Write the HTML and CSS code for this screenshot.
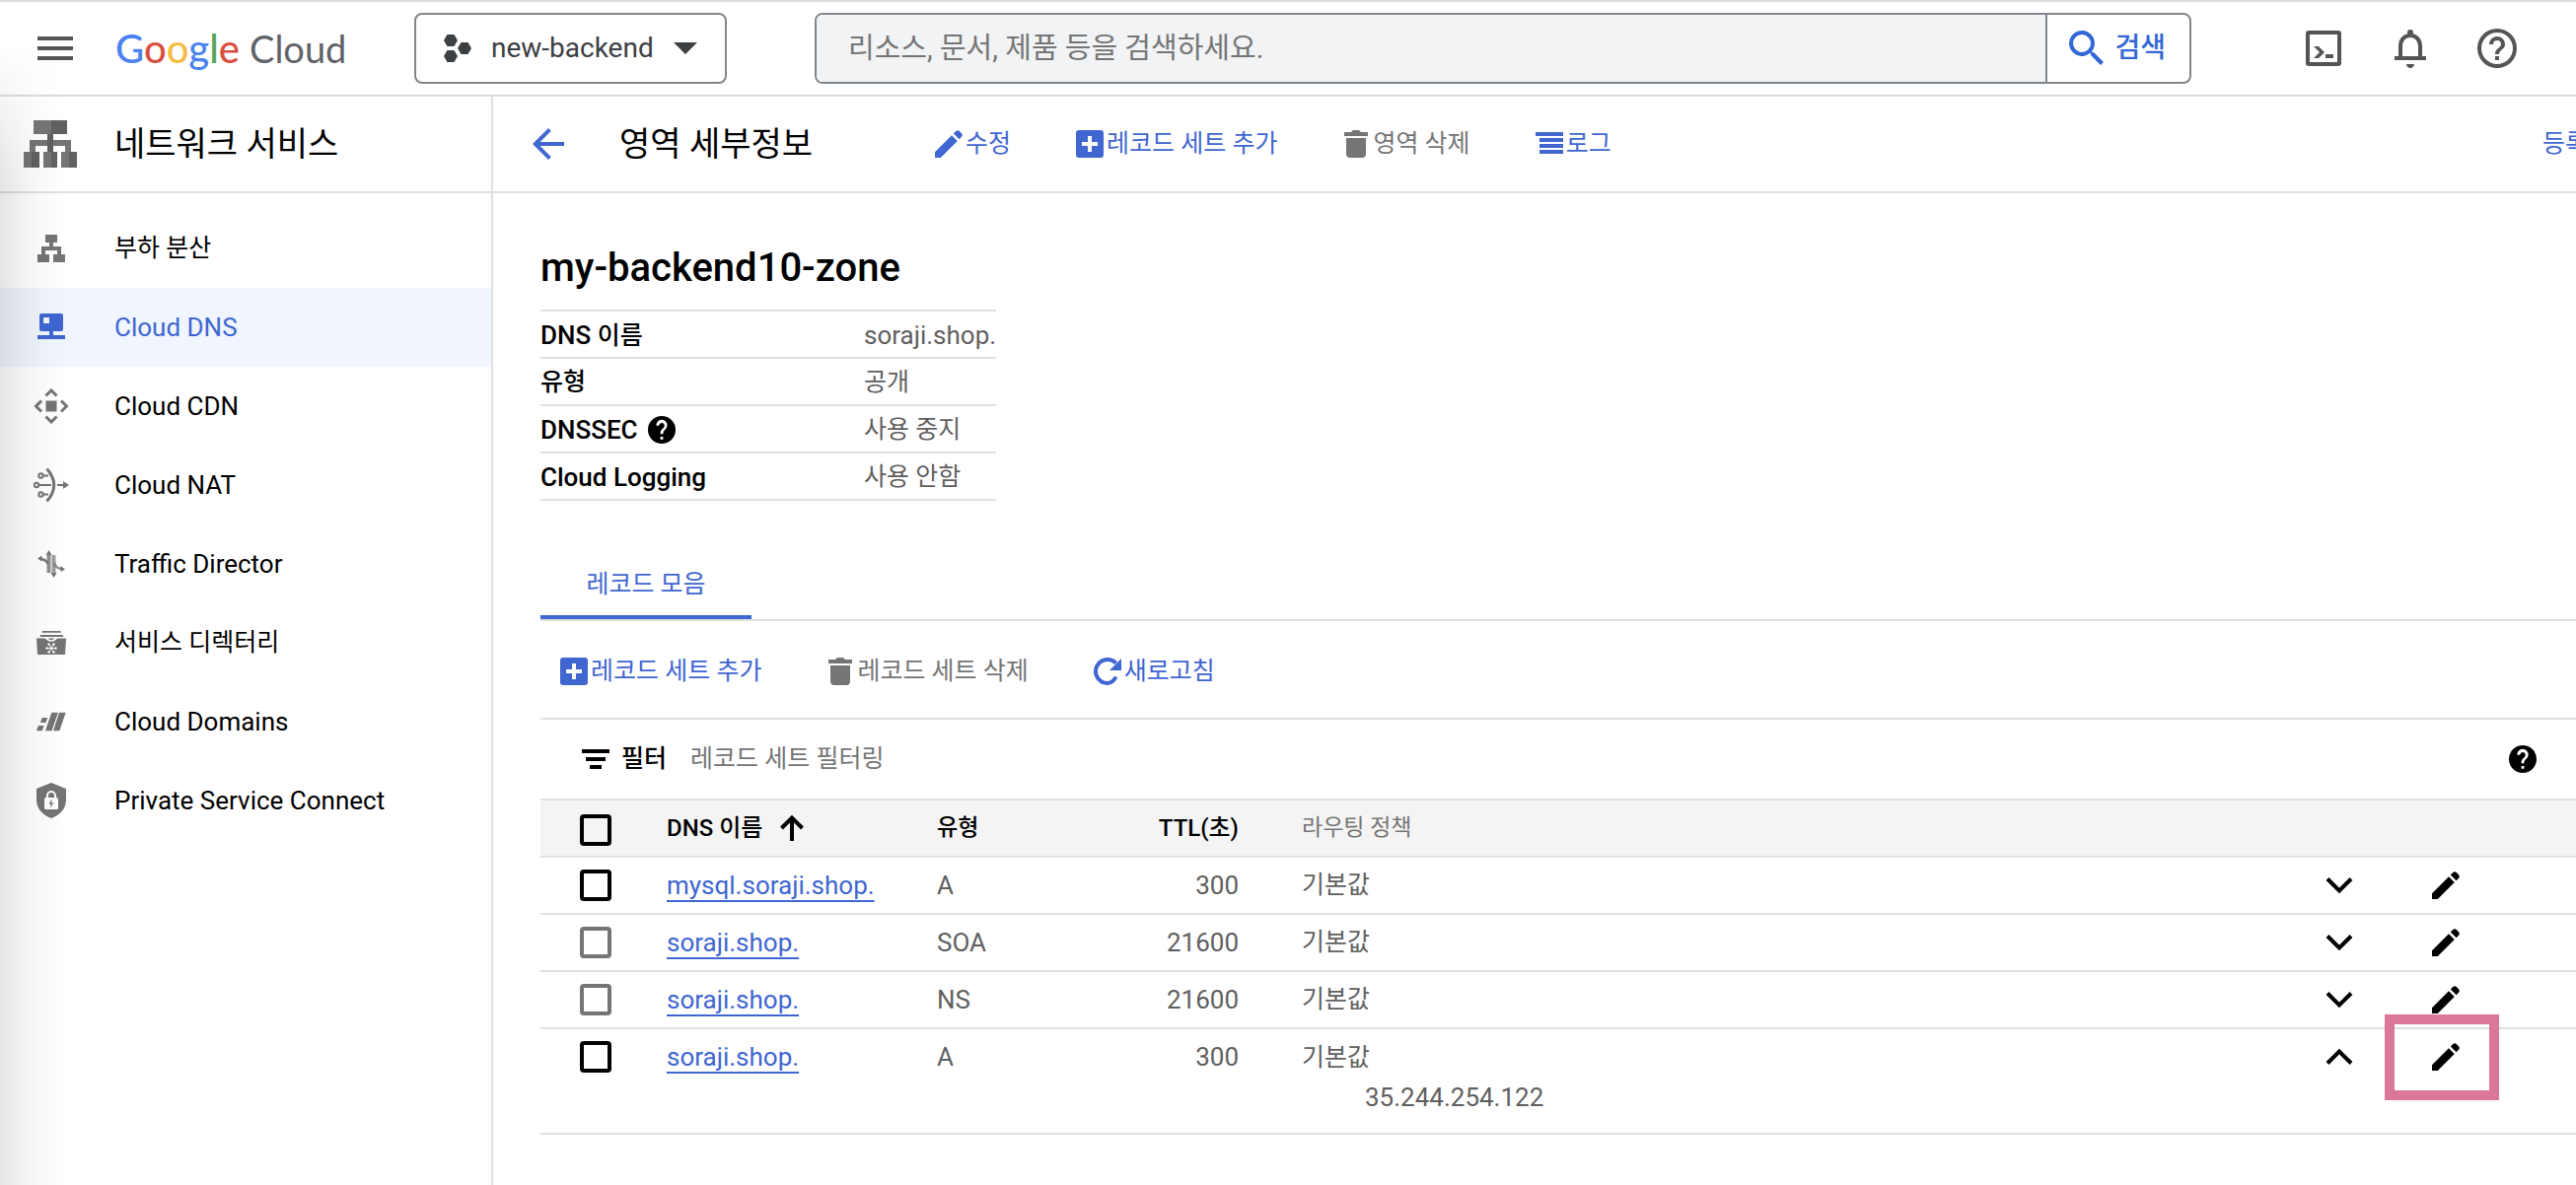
FILE: index.html
```html
<!DOCTYPE html>
<html lang="ko">
<head>
<meta charset="utf-8">
<meta name="viewport" content="width=device-width, initial-scale=1">
<title>영역 세부정보 – 네트워크 서비스 – Google Cloud</title>
<link rel="stylesheet" href="styles.css">
</head>
<body>
<svg class="sprite" aria-hidden="true">
  <symbol id="i-pencil" viewBox="0 0 28 28"><path d="M0 22.200 17 5.200 22.800 11 5.800 28H0zM18.800 3.400 21.200 1q1.800-1.600 3.600 0l2.200 2.200q1.600 1.800 0 3.600l-2.400 2.400z"/></symbol>
  <symbol id="i-add" viewBox="0 0 28 28"><path fill-rule="evenodd" d="M3 0h22a3 3 0 0 1 3 3v22a3 3 0 0 1-3 3H3a3 3 0 0 1-3-3V3a3 3 0 0 1 3-3zm9 6v6H6v4h6v6h4v-6h6v-4h-6V6z"/></symbol>
  <symbol id="i-trash" viewBox="0 0 28 28"><path d="M2 2h7l2-2h6l2 2h7v4H2zM4 8h20v16a4 4 0 0 1-4 4H8a4 4 0 0 1-4-4z"/></symbol>
  <symbol id="i-log" viewBox="0 0 28 28"><path d="M0 2h28v4H0zM4 8h24v4H4zM4 14h24v4H4zM4 20h24v4H4z"/></symbol>
  <symbol id="i-refresh" viewBox="0 0 28 28"><path d="M22.500 19.500A10.500 12 0 0 1 14 26 12 12 0 1 1 22.600 5.600" fill="none" stroke="currentColor" stroke-width="4"/><path d="M28 1v12H16z"/></symbol>
  <symbol id="i-help" viewBox="2 2 20 20"><path d="M12 2a10 10 0 1 0 0 20 10 10 0 0 0 0-20zm1 17h-2v-2h2zm2.070-7.750-.900.920C13.450 12.900 13 13.500 13 15h-2v-.500c0-1.100.450-2.100 1.170-2.830l1.240-1.260A2 2 0 1 0 10 9H8a4 4 0 1 1 7.070 2.250z"/></symbol>
  <symbol id="i-chevron" viewBox="0 0 28 28"><path d="M2 7.500 14 19.500 26 7.500" fill="none" stroke="currentColor" stroke-width="4"/></symbol>
</svg>

<header class="topbar">
  <button class="icon-btn" type="button" aria-label="탐색 메뉴">
    <svg viewBox="0 0 24 24"><path d="M3 18h18v-2H3zm0-5h18v-2H3zm0-7v2h18V6z"/></svg>
  </button>
  <a class="logo" href="#" aria-label="Google Cloud"><span class="logo-google"><span class="g-blue">G</span><span class="g-red">o</span><span class="g-yellow">o</span><span class="g-blue">g</span><span class="g-green">l</span><span class="g-red">e</span></span><span class="logo-cloud">Cloud</span></a>
  <button class="project" type="button">
    <svg class="project-icon" viewBox="0 0 28 28"><path d="M3.500 0h7L14 6l-3.500 6h-7L0 6zM17.500 8h7l3.500 6-3.500 6h-7L14 14zM3.500 16h7l3.500 6-3.500 6h-7L0 22z"/></svg>
    <span>new-backend</span>
    <svg class="caret" viewBox="0 0 24 12"><path d="M0 0h24L12 12z"/></svg>
  </button>
  <form class="search">
    <input type="search" aria-label="검색" placeholder="리소스, 문서, 제품 등을 검색하세요.">
    <button type="button">
      <svg viewBox="0 0 24 24"><path d="M15.500 14h-.790l-.280-.270A6.500 6.500 0 1 0 13.730 14.430l.270.280v.790l5 4.990L20.490 19zm-6 0a4.500 4.500 0 1 1 0-9 4.500 4.500 0 0 1 0 9z"/></svg>검색
    </button>
  </form>
  <div class="tools">
    <button class="icon-btn" type="button" aria-label="Cloud Shell">
      <svg viewBox="0 0 48 48"><path fill-rule="evenodd" d="M9 6h30a3 3 0 0 1 3 3v30a3 3 0 0 1-3 3H9a3 3 0 0 1-3-3V9a3 3 0 0 1 3-3zm1 4v28h28V10z"/><path d="M14 22h5l6 6-6 6h-5l6-6zM26 30h8v4h-8z"/></svg>
    </button>
    <button class="icon-btn" type="button" aria-label="알림">
      <svg viewBox="0 0 24 24"><path d="M12 22c1.100 0 2-.900 2-2h-4c0 1.100.890 2 2 2zm6-6v-5c0-3.070-1.640-5.640-4.500-6.320V4a1.500 1.500 0 0 0-3 0v.680C7.630 5.360 6 7.920 6 11v5H4v2h16v-2zm-2 0H8v-5c0-2.480 1.510-4.500 4-4.500s4 2.020 4 4.500z"/></svg>
    </button>
    <button class="icon-btn" type="button" aria-label="도움말">
      <svg viewBox="0 0 24 24"><path d="M11 18h2v-2h-2zm1-16a10 10 0 1 0 0 20 10 10 0 0 0 0-20zm0 18a8 8 0 1 1 0-16 8 8 0 0 1 0 16zm0-14a4 4 0 0 0-4 4h2a2 2 0 1 1 4 0c0 2-3 1.750-3 5h2c0-2.250 3-2.500 3-5a4 4 0 0 0-4-4z"/></svg>
    </button>
  </div>
</header>

<div class="shell">
  <aside class="sidebar">
    <div class="product">
      <svg viewBox="0 0 54 48"><path fill="#757575" d="M10 0h34v14H10zM6 20h42v6H6zM6 26h6v6H6zM42 26h6v6h-6zM0 32h16v16H0zM20 32h14v16H20zM38 32h16v16H38z"/><path fill="#616161" d="M28 0h16v14H28zM24 14h6v18h-6zM8 32h8v16H8zM28 32h6v16h-6zM46 32h8v16h-8z"/></svg>
      <h2>네트워크 서비스</h2>
    </div>
    <nav aria-label="네트워크 서비스">
      <a class="ko" href="#"><svg viewBox="0 0 36 36"><path d="M12 4h12v8h-4v4h8v8h4v8H20v-8h4v-4H12v4h4v8H4v-8h4v-8h8v-4h-4z"/></svg>부하 분산</a>
      <a class="active" href="#" aria-current="page"><svg viewBox="0 0 36 36"><path fill-rule="evenodd" d="M8 4h20a2 2 0 0 1 2 2v14a2 2 0 0 1-2 2h-8v4h12v4H4v-4h12v-4H8a2 2 0 0 1-2-2V6a2 2 0 0 1 2-2zm2 4v6h6V8z"/></svg>Cloud DNS</a>
      <a href="#"><svg viewBox="0 0 36 36"><path d="M12.500 12.500h11v11h-11z"/><path d="m12.500 7.500 5.500-5.500 5.500 5.500M12.500 28.500l5.500 5.500 5.500-5.500M8 12.500 2.500 18 8 23.500M28 12.500l5.500 5.500-5.500 5.500" fill="none" stroke="currentColor" stroke-width="3"/></svg>Cloud CDN</a>
      <a href="#"><svg viewBox="0 0 36 36"><g fill="none" stroke="currentColor" stroke-width="2"><circle cx="7.500" cy="8.500" r="2.200"/><circle cx="3" cy="18" r="2.200"/><circle cx="7.500" cy="27.500" r="2.200"/><path d="M10 8.500h5M5.500 18H18M10 27.500h5M24 18h7"/><path d="M13.500 1.500q14.500 16.500 0 33" stroke-width="3"/></g><path d="m30 14 6 4-6 4z"/></svg>Cloud NAT</a>
      <a href="#"><svg viewBox="0 0 36 36"><g fill="none" stroke="currentColor"><path d="M15.500 27V8" stroke-width="4" opacity=".8"/><path d="M20.500 9v19" stroke-width="4" opacity=".7"/><path d="M14.500 18q-1-4-7-5" stroke-width="2.500"/><path d="M21 17q1 5 7 6" stroke-width="2.500" opacity=".8"/></g><path d="m15.500 4 3 5h-6zM20.500 32l-3-5h6zM4 12.500l4.500-3v6zM32 23.500 27.500 20v6z"/></svg>Traffic Director</a>
      <a class="ko" href="#"><svg viewBox="0 0 36 36"><path d="M9 6h18.500l.5 1.800H8.500zM7 10h22.500l1 2h-24zM3 13.500h8.500l4 3h5l4-3H33L32 30H4z"/><path d="M14.500 13.500h7l-2 1.500h-3z"/><path d="M13 23.500h10M15.500 19.500l5 8M20.500 19.500l-5 8" stroke="#fff"/><g fill="#fff"><circle cx="15.500" cy="19.500" r="1.200"/><circle cx="20.500" cy="19.500" r="1.200"/><circle cx="13.500" cy="23.500" r="1.200"/><circle cx="22.500" cy="23.500" r="1.200"/><circle cx="15.500" cy="27.500" r="1.200"/><circle cx="20.500" cy="27.500" r="1.200"/></g></svg>서비스 디렉터리</a>
      <a href="#"><svg viewBox="0 0 36 36"><path d="M26 8.700h6.700l-6.400 18.600H20zM18.300 8.700H25l-6.500 18.600H12zM8.700 14h5.500l-1.700 5H7zM5 22h5.500l-1.700 5.300H3z"/></svg>Cloud Domains</a>
      <a href="#"><svg viewBox="0 0 36 36"><path d="m18 0 15 6v11q0 13-15 19Q3 30 3 17V6z"/><rect x="11" y="15" width="14" height="12" rx="1.500" fill="#fff"/><path d="M14 15v-2a4 4 0 0 1 8 0v2" fill="none" stroke="#fff" stroke-width="2"/><path d="m18.500 16.500-3 5h2.300l-.800 4 3.500-5h-2.300z"/></svg>Private Service Connect</a>
    </nav>
  </aside>

  <main>
    <div class="actionbar">
      <button class="back" type="button" aria-label="뒤로"><svg viewBox="4 4 16 16"><path d="M20 11H7.830l5.590-5.590L12 4l-8 8 8 8 1.410-1.410L7.830 13H20z"/></svg></button>
      <h1>영역 세부정보</h1>
      <div class="actions">
        <button class="action" type="button"><svg><use href="#i-pencil"/></svg>수정</button>
        <button class="action" type="button"><svg><use href="#i-add"/></svg>레코드 세트 추가</button>
        <button class="action muted" type="button"><svg><use href="#i-trash"/></svg>영역 삭제</button>
        <button class="action" type="button"><svg><use href="#i-log"/></svg>로그</button>
      </div>
      <button class="action register" type="button">등록</button>
    </div>

    <div class="content">
      <h2 class="zone">my-backend10-zone</h2>
      <table class="details">
        <tbody>
          <tr><th scope="row">DNS <span class="ko">이름</span></th><td>soraji.shop.</td></tr>
          <tr><th class="ko" scope="row">유형</th><td class="ko">공개</td></tr>
          <tr><th scope="row"><span class="with-icon">DNSSEC <svg><use href="#i-help"/></svg></span></th><td class="ko">사용 중지</td></tr>
          <tr><th scope="row">Cloud Logging</th><td class="ko">사용 안함</td></tr>
        </tbody>
      </table>

      <div class="tabs" role="tablist">
        <button class="tab" type="button" role="tab" aria-selected="true">레코드 모음</button>
      </div>

      <div class="toolbar">
        <button class="action" type="button"><svg><use href="#i-add"/></svg>레코드 세트 추가</button>
        <button class="action muted" type="button"><svg><use href="#i-trash"/></svg>레코드 세트 삭제</button>
        <button class="action" type="button"><svg><use href="#i-refresh"/></svg>새로고침</button>
      </div>

      <div class="filter">
        <svg viewBox="0 0 28 28"><path d="M0 4h28v4H0zM4 12h20v4H4zM8 20h12v4H8z"/></svg>
        <label for="filter">필터</label>
        <input id="filter" type="text" placeholder="레코드 세트 필터링">
        <button class="plain" type="button" aria-label="도움말"><svg><use href="#i-help"/></svg></button>
      </div>

      <table class="records">
        <colgroup><col class="c-check"><col class="c-name"><col class="c-type"><col class="c-ttl"><col><col class="c-expand"><col class="c-edit"><col class="c-end"></colgroup>
        <thead>
          <tr>
            <th><input type="checkbox" aria-label="모두 선택"></th>
            <th scope="col"><span class="with-icon">DNS 이름 <svg class="sort" viewBox="0 0 28 28"><path d="M14 27V3M3.500 14 14 3.500 24.500 14" fill="none" stroke="currentColor" stroke-width="4"/></svg></span></th>
            <th class="ko" scope="col">유형</th>
            <th class="num" scope="col">TTL(초)</th>
            <th class="ko soft" scope="col">라우팅 정책</th>
            <th></th><th></th><th></th>
          </tr>
        </thead>
        <tbody>
          <tr>
            <td><input type="checkbox" aria-label="mysql.soraji.shop. A"></td>
            <td><a href="#">mysql.soraji.shop.</a></td><td>A</td><td class="num">300</td><td class="ko">기본값</td>
            <td class="mid"><button class="plain" type="button" aria-label="펼치기"><svg><use href="#i-chevron"/></svg></button></td>
            <td class="mid"><button class="plain" type="button" aria-label="수정"><svg><use href="#i-pencil"/></svg></button></td><td></td>
          </tr>
          <tr>
            <td><input type="checkbox" aria-label="soraji.shop. SOA" disabled></td>
            <td><a href="#">soraji.shop.</a></td><td>SOA</td><td class="num">21600</td><td class="ko">기본값</td>
            <td class="mid"><button class="plain" type="button" aria-label="펼치기"><svg><use href="#i-chevron"/></svg></button></td>
            <td class="mid"><button class="plain" type="button" aria-label="수정"><svg><use href="#i-pencil"/></svg></button></td><td></td>
          </tr>
          <tr>
            <td><input type="checkbox" aria-label="soraji.shop. NS" disabled></td>
            <td><a href="#">soraji.shop.</a></td><td>NS</td><td class="num">21600</td><td class="ko">기본값</td>
            <td class="mid"><button class="plain" type="button" aria-label="펼치기"><svg><use href="#i-chevron"/></svg></button></td>
            <td class="mid"><button class="plain" type="button" aria-label="수정"><svg><use href="#i-pencil"/></svg></button></td><td></td>
          </tr>
          <tr>
            <td><input type="checkbox" aria-label="soraji.shop. A"></td>
            <td><a href="#">soraji.shop.</a></td><td>A</td><td class="num">300</td>
            <td><span class="ko">기본값</span><div class="address">35.244.254.122</div></td>
            <td class="mid"><button class="plain open" type="button" aria-label="접기"><svg><use href="#i-chevron"/></svg></button></td>
            <td class="mid marked"><button class="plain" type="button" aria-label="수정"><svg><use href="#i-pencil"/></svg></button></td><td></td>
          </tr>
        </tbody>
      </table>
    </div>
  </main>
</div>
</body>
</html>
```

FILE: styles.css
```css
:root {
  --blue: #3f66d1;
  --line: #e0e0e0;
  --grey: #757575;
  --text: #5f5f5f;
  --black: #000;
}

*, *::before, *::after { box-sizing: border-box; }

body {
  position: relative;
  display: flex;
  flex-direction: column;
  min-height: 100vh;
  margin: 0;
  overflow-x: hidden;
  background: #fff;
  border-top: 2px solid #dcdcdc;
  color: var(--black);
  font: 26px/32px Roboto, "Noto Sans CJK KR", sans-serif;
}

/* Soft shade along the left edge of the window */
body::after {
  content: "";
  position: absolute;
  inset: 0 auto 0 0;
  width: 66px;
  pointer-events: none;
  background: linear-gradient(90deg, rgba(0, 0, 0, .1), rgba(0, 0, 0, .04) 45%, rgba(0, 0, 0, .015) 75%, transparent);
  mask-image: linear-gradient(transparent 40px, #000 180px);
}

h1, h2 { margin: 0; font-weight: 400; }
button, input { margin: 0; padding: 0; font: inherit; color: inherit; }
button { display: flex; align-items: center; border: 0; background: none; cursor: pointer; white-space: nowrap; }
a { color: var(--blue); text-decoration: none; }
svg { flex: none; display: block; fill: currentColor; }

.sprite { position: absolute; width: 0; height: 0; }
.ko { font-size: 25px; }

/* Top bar */
.topbar {
  display: flex;
  align-items: center;
  height: 96px;
  padding: 0 56px 0 32px;
  border-bottom: 2px solid #dadce0;
}
.icon-btn { color: #555; }
.icon-btn svg { width: 48px; height: 48px; }

.logo {
  display: flex;
  gap: 10px;
  width: 240px;
  margin-left: 37px;
  color: #5f6368;
  font: 40px/48px Lato, sans-serif;
}
.logo-google { font-weight: 500; }
.logo-cloud { font-size: 38px; }
.g-blue { color: #4c83ef; }
.g-red { color: #d94f3f; }
.g-yellow { color: #f2bd42; }
.g-green { color: #58a55c; }

.project {
  width: 317px;
  height: 72px;
  margin: 0 89px 0 63px;
  padding: 0 28px;
  border: 2px solid #80868b;
  border-radius: 8px;
  color: #3c4043;
  font-size: 28px;
}
.project span { margin: 0 auto 0 20px; }
.project-icon { width: 28px; height: 28px; }
.caret { width: 24px; height: 12px; }

.search {
  display: flex;
  flex: 1;
  height: 72px;
  border: 2px solid #80868b;
  border-radius: 8px;
  overflow: hidden;
  font-size: 28px;
}
.search input {
  flex: 1;
  min-width: 0;
  padding: 0 32px;
  border: 0;
  border-right: 2px solid #80868b;
  background: #f1f3f4;
  font-size: 29px;
  outline: 0;
}
.search input::placeholder { color: var(--grey); opacity: 1; }
.search button { gap: 4px; padding: 0 24px 0 16px; color: #3367d6; font-weight: 500; }
.search svg { width: 48px; height: 48px; }

.tools { display: flex; gap: 40px; margin-left: 110px; }

/* Frame */
.shell { display: flex; flex: 1; }
.sidebar { flex: none; width: 500px; border-right: 2px solid var(--line); }
main { flex: 1; min-width: 0; }

.product {
  display: flex;
  align-items: center;
  gap: 38px;
  height: 98px;
  padding-left: 24px;
  border-bottom: 2px solid var(--line);
}
.product svg { width: 54px; height: 48px; }
.product h2, .actionbar h1 { font-size: 34px; line-height: 48px; }

nav { padding-top: 16px; }
nav a {
  display: flex;
  align-items: center;
  gap: 46px;
  height: 80px;
  padding-left: 34px;
  color: var(--black);
}
nav svg { width: 36px; height: 36px; color: var(--grey); }
nav .active, nav .active svg { color: var(--blue); }
nav .active { background: #f0f5fe; }

/* Action bar */
.actionbar {
  display: flex;
  align-items: center;
  height: 98px;
  padding-left: 40px;
  border-bottom: 2px solid var(--line);
  overflow: hidden;
}
.back { color: var(--blue); }
.back svg { width: 32px; height: 32px; }
.actionbar h1 { width: 320px; margin-left: 56px; white-space: nowrap; }
.actions, .toolbar { display: flex; align-items: center; gap: 66px; }
.action { gap: 3px; color: var(--blue); font-size: 25px; }
.action svg { width: 28px; height: 28px; }
.muted { color: var(--grey); }
.register { margin: 0 -12px 0 auto; }

/* Zone summary */
.content { padding: 48px 0 48px 48px; }
.zone { font-size: 40px; font-weight: 500; line-height: 56px; }

.details { margin-top: 14px; border-collapse: collapse; border-top: 2px solid var(--line); }
.details tr { height: 48px; border-bottom: 2px solid var(--line); }
.details th, .details td { padding: 2px 0 0; }
.details th { width: 328px; min-width: 328px; text-align: left; font-weight: 500; }
.details td { color: var(--text); }
.with-icon { display: flex; align-items: center; gap: 10px; }
.with-icon svg { width: 28px; height: 28px; }

/* Tabs and toolbar */
.tabs { display: flex; margin-top: 48px; border-bottom: 2px solid var(--line); }
.tab {
  justify-content: center;
  width: 214px;
  height: 72px;
  padding-top: 6px;
  border-bottom: 4px solid var(--blue);
  color: var(--blue);
  font-size: 25px;
}
.toolbar { height: 100px; padding: 4px 0 0 20px; border-bottom: 2px solid var(--line); }

.filter { display: flex; align-items: center; height: 80px; padding: 0 40px 0 42px; font-size: 25px; }
.filter > svg { width: 28px; height: 28px; }
.filter label { margin: 0 24px 0 12px; font-weight: 500; }
.filter input { flex: 1; min-width: 0; border: 0; outline: 0; }
.filter input::placeholder { color: var(--grey); opacity: 1; }

.plain svg { width: 28px; height: 28px; }

/* Record sets */
.records { width: 100%; table-layout: fixed; border-collapse: collapse; border-top: 2px solid var(--line); }
.c-check { width: 128px; }
.c-name { width: 274px; }
.c-type { width: 140px; }
.c-ttl { width: 230px; }
.c-expand { width: 88px; }
.c-edit { width: 128px; }
.c-end { width: 68px; }
.records tr { border-bottom: 2px solid var(--line); }
.records th, .records td { height: 56px; padding: 0; text-align: left; vertical-align: top; line-height: 56px; }
.records th { background: #f4f4f4; font-size: 24px; font-weight: 500; }
.records th.ko { font-size: 23px; }
.records td { color: var(--text); }
.records th .with-icon { gap: 16px; }
.records .num { padding-right: 64px; text-align: right; }
.records .soft { color: var(--grey); font-weight: 400; }
.records td:first-child { padding: 12px 0 0 40px; line-height: 0; }
.records th:first-child { padding: 14px 0 0 40px; line-height: 0; }
.records a { text-decoration: underline 2px; text-underline-offset: 6px; text-decoration-skip-ink: none; }

.records input {
  appearance: none;
  width: 32px;
  height: 32px;
  border: 4px solid var(--black);
  border-radius: 4px;
}
.records input:disabled { border-color: var(--grey); }

.mid .plain { justify-content: center; width: 100%; height: 56px; color: var(--black); }
.open svg { transform: rotate(180deg); }
.address { padding: 0 0 24px 64px; line-height: 24px; }

/* Callout frame over the edit button */
.marked { position: relative; }
.marked::after {
  content: "";
  position: absolute;
  top: -15px;
  left: 2px;
  width: 116px;
  height: 87px;
  border: 10px solid #db7799;
  pointer-events: none;
}
```
